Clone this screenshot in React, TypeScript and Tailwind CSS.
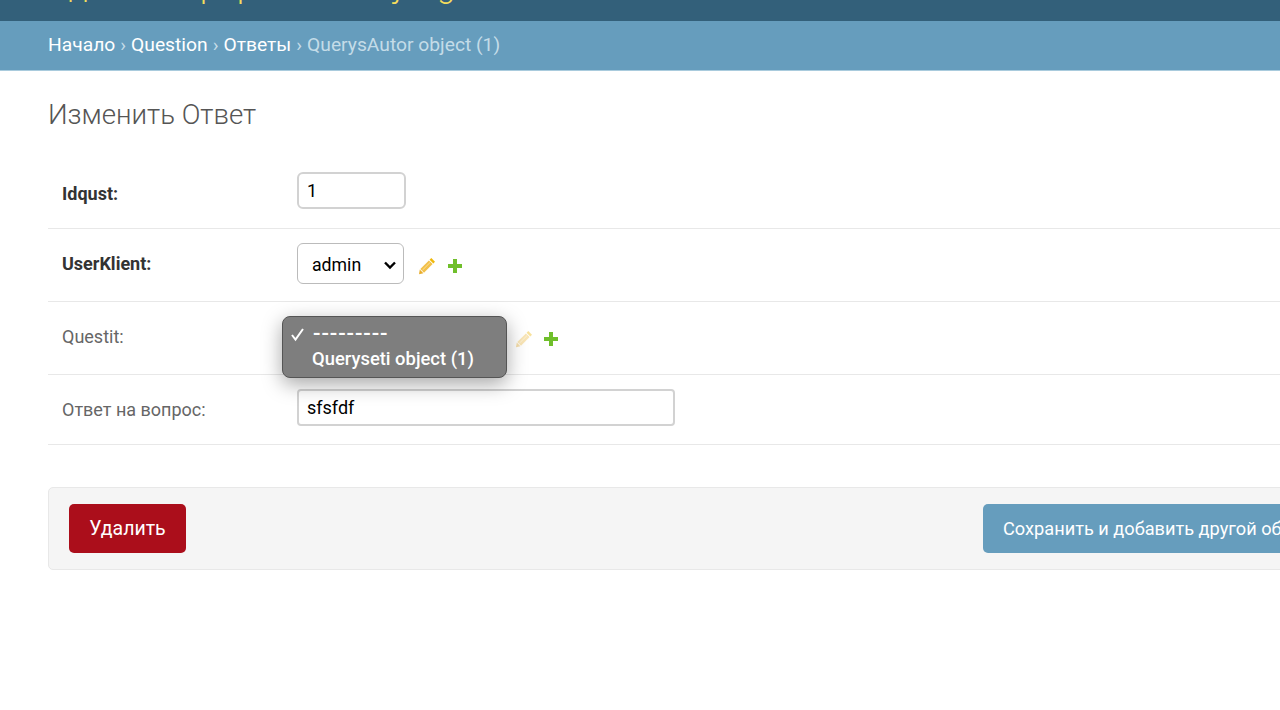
import type { ReactNode } from 'react'

function Pencil({ faded }: { faded?: boolean }) {
  return (
    <svg width="18" height="18" viewBox="0 0 18 18" className={faded ? 'opacity-40' : ''}>
      <path d="M13.300 1l3.700 3.700-1.700 1.700-3.700-3.700z" fill="#efb80b" />
      <path d="M10.900 3.400l3.700 3.700-8.600 8.600-3.700-3.700z" fill="#f2c04a" />
      <path d="M12 5.600l-7.600 7.600" stroke="#fbe7b0" strokeWidth="0.800" />
      <path d="M1.800 12.600l3.600 3.600-4.400 1z" fill="#e8ad2c" />
    </svg>
  )
}

function Plus() {
  return (
    <svg width="16" height="16" viewBox="0 0 16 16">
      <path d="M6 1h4v5h5v4h-5v5H6v-5H1V6h5z" fill="#70bf2b" />
    </svg>
  )
}

function Row({ label, bold, up, h, children }: { label: string; bold?: boolean; up?: boolean; h: string; children: ReactNode }) {
  return (
    <div className={`flex items-center border-b border-[#e8e8e8] pl-[14px] ${h}`}>
      <label className={`w-[235px] shrink-0 text-[18px] ${up ? 'mb-[3px]' : ''} ${bold ? 'font-bold text-[#333]' : 'text-[#666]'}`}>
        {label}
      </label>
      {children}
    </div>
  )
}

export default function App() {
  return (
    <div className="h-screen w-full overflow-hidden bg-white font-['Roboto',sans-serif]">
      {/* Header, cut by the top of the window */}
      <div className="h-[21px] overflow-hidden bg-[#33607a]">
        <div className="mt-[-34px] pl-[48px] text-[33px] leading-[40px] font-light text-[#f5dd5d] whitespace-nowrap">
          Администрирование Django
        </div>
      </div>

      {/* Breadcrumbs */}
      <div className="flex h-[50px] items-center border-b border-[#a9cbdd] bg-[#669dbd] px-[48px] text-[19.250px] text-[#c4dce8] whitespace-nowrap">
        <a className="text-white">Начало</a>
        <span className="mx-[5px]">›</span>
        <a className="text-white">Question</a>
        <span className="mx-[5px]">›</span>
        <a className="text-white">Ответы</a>
        <span className="mx-[5px]">›</span>
        <span>QuerysAutor object (1)</span>
      </div>

      <div className="w-[1500px] pl-[48px]">
        <h1 className="mt-[25px] mb-[25px] text-[27.600px] leading-[38px] font-light text-[#555]">Изменить Ответ</h1>

        <Row label="Idqust:" bold h="h-[70px]">
          <input
            readOnly
            value="1"
            className="mb-[7px] h-[37px] w-[109px] rounded-[6px] border-2 border-[#d2d2d2] px-[8px] text-[18px] text-black"
          />
        </Row>
        <Row label="UserKlient:" bold up h="h-[73px]">
          <div className="mb-[3px] flex h-[41px] w-[107px] items-center justify-between rounded-[6px] border border-[#bbbbbb] pt-[3px] pr-[6px] pl-[14px] text-[17.700px] text-black">
            admin
            <svg width="14" height="14" viewBox="0 0 14 14" fill="none">
              <path d="M2 4.500l5 5 5-5" stroke="#000" strokeWidth="2.400" />
            </svg>
          </div>
          <div className="mt-[2px] ml-[14px] flex items-center gap-[11px]">
            <Pencil />
            <Plus />
          </div>
        </Row>
        <Row label="Questit:" up h="h-[73px]">
          <div className="relative h-[41px] w-[204px]">
            {/* Open native select list */}
            <div className="absolute top-[-2px] left-[-15px] z-10 h-[62px] w-[225px] rounded-[8px] border border-[#555] bg-[#7e7e7e] pt-[5px] text-[18.400px] leading-[24px] font-medium text-white shadow-[0_6px_20px_rgba(0,0,0,0.35)]">
              <div className="flex h-[25px] items-center">
                <svg width="30" height="25" viewBox="0 0 30 25" fill="none">
                  <path d="M9 13l3.500 4.500L20 7" stroke="#fff" strokeWidth="2" />
                </svg>
                <span className="text-[22px] tracking-[0.900px]">---------</span>
              </div>
              <div className="pl-[29px]">Queryseti object (1)</div>
            </div>
          </div>
          <div className="mt-[2px] ml-[14px] flex items-center gap-[10px]">
            <Pencil faded />
            <Plus />
          </div>
        </Row>
        <Row label="Ответ на вопрос:" h="h-[70px]">
          <input
            readOnly
            value="sfsfdf"
            className="mb-[4px] h-[37px] w-[378px] rounded-[4px] border-2 border-[#d2d2d2] px-[8px] text-[18px] text-black"
          />
        </Row>

        {/* Submit row */}
        <div className="mt-[42px] flex h-[83px] items-center justify-between rounded-[5px] border border-[#e8e8e8] bg-[#f5f5f5] px-[20px]">
          <a className="flex h-[49px] w-[117px] items-center justify-center rounded-[5px] bg-[#ab0e1b] text-[19.500px] text-white">
            Удалить
          </a>
          <div className="flex w-[496px] shrink-0">
            <a className="flex h-[49px] w-[400px] items-center rounded-[5px] bg-[#669dbd] pl-[20px] text-[18.200px] text-white whitespace-nowrap">
              Сохранить и добавить другой объект
            </a>
          </div>
        </div>
      </div>
    </div>
  )
}
